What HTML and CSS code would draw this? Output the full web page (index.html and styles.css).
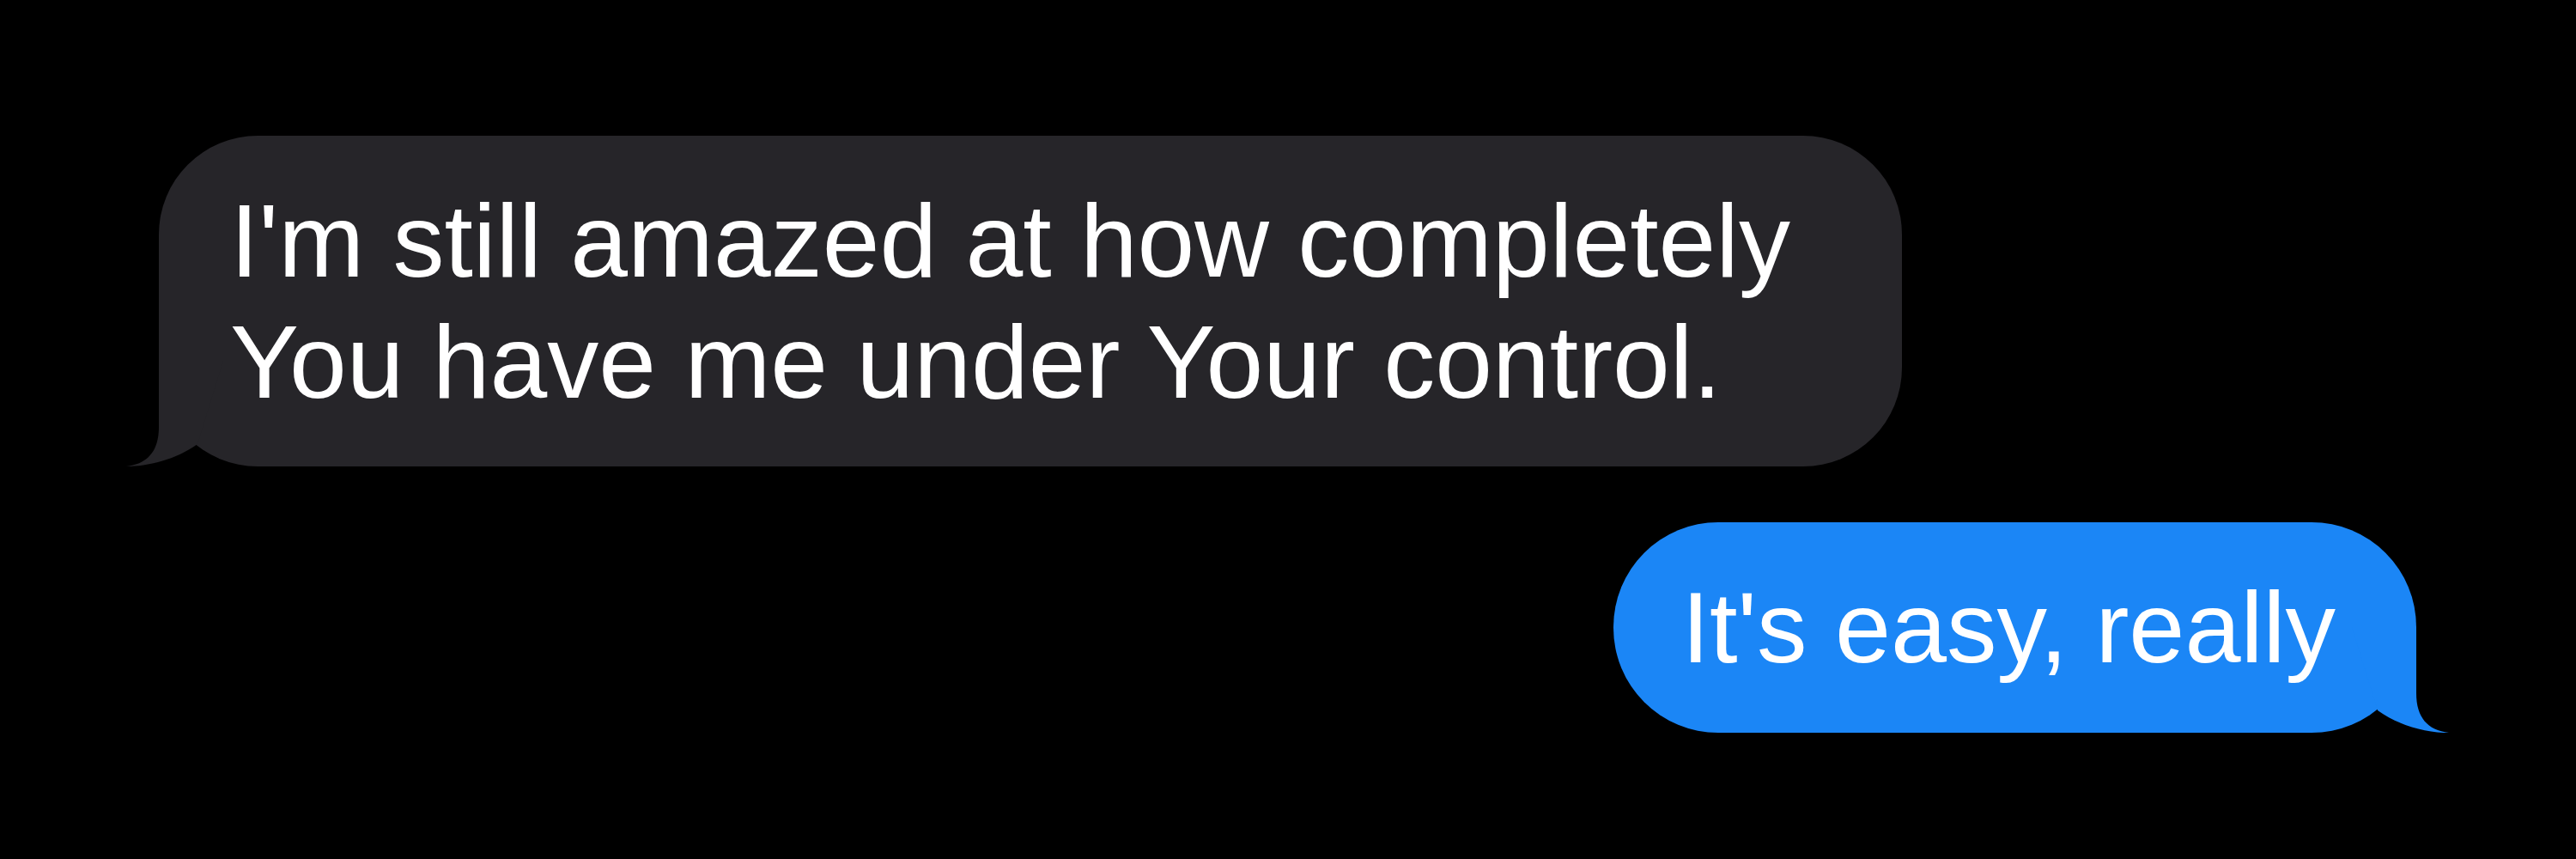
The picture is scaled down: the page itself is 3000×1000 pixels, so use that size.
FILE: index.html
```html
<!DOCTYPE html>
<html lang="en" dir="ltr">

<head>
  <meta charset="utf-8">
  <title>Messages</title>
  <link rel="stylesheet" href="styles.css">
  <meta name="viewport" content="width=device-width, initial-scale=1.0">
</head>

<body>
  <div class="thread">
    <div class="bubble received">
      <p>I'm still amazed at how completely You have me under Your control.</p>
      <svg class="tail" viewBox="0 0 120 130" width="120" height="130">
        <path d="M40 7 L40 84 C40 112 27 127 2 130 C27 130 60 122 85 104 L115 7 Z" />
      </svg>
    </div>
    <div class="bubble sent">
      <p>It's easy, really</p>
      <svg class="tail" viewBox="0 0 120 130" width="120" height="130">
        <path d="M40 7 L40 84 C40 112 27 127 2 130 C27 130 60 122 85 104 L115 7 Z" />
      </svg>
    </div>
  </div>
</body>

</html>
```

FILE: styles.css
```css
* {
  margin: 0;
  padding: 0;
  box-sizing: border-box;
}

body {
  background: #000;
  font-family: 'Liberation Sans', Arial, sans-serif;
  color: #fff;
}

.thread {
  display: flex;
  flex-direction: column;
  gap: 65px;
  padding: 158px 186px 0 185px;
}

.bubble {
  position: relative;
}

.bubble p {
  position: relative;
  z-index: 1;
}

.bubble .tail {
  position: absolute;
  bottom: 0;
}

.received {
  align-self: flex-start;
  width: 2030px;
  padding: 52px 92px 51px 83px;
  background: #262529;
  border-radius: 115px;
  font-size: 120px;
  line-height: 141px;
}

.received .tail {
  left: -40px;
  fill: #262529;
}

.sent {
  align-self: flex-end;
  padding: 52px 94px 52px 80px;
  background: #1b86f6;
  border-radius: 122px;
  font-size: 117px;
  line-height: 141px;
}

.sent .tail {
  right: -40px;
  fill: #1b86f6;
  transform: scaleX(-1);
}
```
